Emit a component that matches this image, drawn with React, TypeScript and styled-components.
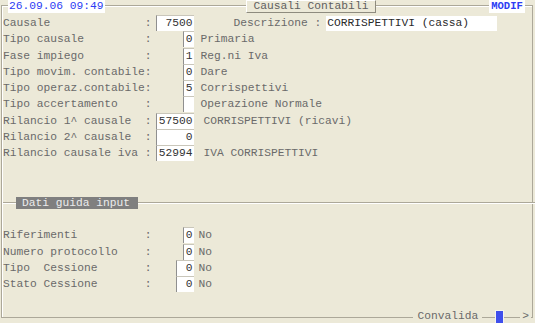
import styled, { createGlobalStyle } from 'styled-components'

const GlobalStyle = createGlobalStyle`
  html, body {
    margin: 0;
    padding: 0;
    background: #ece9d8;
  }
`

// Whole terminal-like window
const Screen = styled.div`
  width: 535px;
  height: 323px;
  box-sizing: border-box;
  padding: 5px 2px 5px 1px;
  background: #ece9d8;
  font-family: "Liberation Mono", "Courier New", monospace;
  font-size: 11.25px;
  color: #6a6a6a;
  overflow: hidden;
`

// Etched group frame
const Frame = styled.div`
  height: 100%;
  box-sizing: border-box;
  border: 1px solid #aca899;
  box-shadow: inset 1px 1px 0 #ffffff;
  padding-left: 1px;
  display: flex;
  flex-direction: column;
`

// Header strip sitting on the top edge of the frame
const Header = styled.div`
  display: flex;
  align-items: flex-start;
  height: 13px;
  margin-top: -6px;
`

const DateBox = styled.div`
  margin-left: 5px;
  width: 97px;
  height: 13px;
  line-height: 13px;
  padding-left: 1px;
  box-sizing: border-box;
  background: #ffffff;
  color: #2c3cf4;
`

const Title = styled.div`
  margin-left: 141px;
  width: 130px;
  height: 13px;
  box-sizing: border-box;
  line-height: 11px;
  text-align: center;
  background: #ece9d8;
  border: 1px solid;
  border-color: #ffffff #8e8b7e #8e8b7e #ffffff;
  color: #606060;
`

const ModeBox = styled.div`
  margin-left: 113px;
  width: 36px;
  height: 13px;
  line-height: 13px;
  text-align: center;
  background: #ffffff;
  color: #2c3cf4;
  font-weight: bold;
  font-size: 10.5px;
`

const Body = styled.div`
  padding-top: 2px;
`

const Row = styled.div`
  display: flex;
  align-items: center;
  height: 16.25px;
`

const Label = styled.span`
  flex: none;
  width: 21ch;
  white-space: pre;
`

const Colon = styled.span`
  flex: none;
  width: 1ch;
`

// Slot where input boxes line up on their right edge
const FieldSlot = styled.div`
  flex: none;
  width: 42px;
  display: flex;
  justify-content: flex-end;
`

const ValueBox = styled.div<{ $chars: number }>`
  width: calc(${(p) => p.$chars}ch + 2px);
  height: 15px;
  line-height: 15px;
  box-sizing: content-box;
  padding-right: 1px;
  background: #ffffff;
  border-left: 1px solid #8f8f8f;
  border-top: 1px solid #c9c6ba;
  color: #333333;
  text-align: right;
  white-space: pre;
`

const Desc = styled.span<{ $gap?: number }>`
  margin-left: ${(p) => p.$gap ?? 7}px;
  white-space: pre;
`

const DescLabel = styled.span`
  margin-left: 40px;
  white-space: pre;
`

const DescBox = styled.div`
  margin-left: 5px;
  width: 171px;
  height: 15px;
  line-height: 15px;
  box-sizing: border-box;
  padding-left: 1px;
  background: #ffffff;
  color: #2a2a2a;
  white-space: pre;
`

// "Dati guida input" separator
const Section = styled.div`
  display: flex;
  align-items: center;
  height: 12px;
  margin-top: 36px;
  margin-right: -3px;
`

const Rule = styled.div<{ $width?: string }>`
  flex: ${(p) => (p.$width ? 'none' : '1')};
  width: ${(p) => p.$width ?? 'auto'};
  height: 0;
  border-top: 1px solid #aca899;
  border-bottom: 1px solid #ffffff;
`

const SectionLabel = styled.div`
  flex: none;
  width: 122px;
  height: 12px;
  line-height: 12px;
  box-sizing: border-box;
  padding-left: 6px;
  background: #7f7f7f;
  color: #ececec;
  white-space: pre;
`

const Lower = styled.div`
  margin-top: 18px;
`

// Bottom strip sitting on the lower edge of the frame
const Footer = styled.div`
  margin-top: auto;
  margin-bottom: -6px;
  height: 13px;
  display: flex;
  justify-content: flex-end;
  align-items: center;
`

const FooterText = styled.span`
  background: #ece9d8;
  padding: 0 4px;
  margin-right: 13px;
  line-height: 13px;
`

const Cursor = styled.div`
  width: 7px;
  height: 12px;
  background: #3f4fec;
  border: 1px solid #f5f4ef;
  margin-right: 16px;
`

const Arrow = styled.span`
  background: #ece9d8;
  padding: 0 2px;
  margin-right: 1px;
  line-height: 13px;
`

type Field = {
  label: string
  value: string
  chars: number
  desc?: string
  gap?: number
}

const topFields: Field[] = [
  { label: 'Tipo causale', value: '0', chars: 1, desc: 'Primaria' },
  { label: 'Fase impiego', value: '1', chars: 1, desc: 'Reg.ni Iva' },
  { label: 'Tipo movim. contabile', value: '0', chars: 1, desc: 'Dare' },
  { label: 'Tipo operaz.contabile', value: '5', chars: 1, desc: 'Corrispettivi' },
  { label: 'Tipo accertamento', value: '', chars: 1, desc: 'Operazione Normale' },
  { label: 'Rilancio 1^ causale', value: '57500', chars: 5, desc: 'CORRISPETTIVI (ricavi)', gap: 10 },
  { label: 'Rilancio 2^ causale', value: '0', chars: 5 },
  { label: 'Rilancio causale iva', value: '52994', chars: 5, desc: 'IVA CORRISPETTIVI', gap: 10 },
]

const lowerFields: Field[] = [
  { label: 'Riferimenti', value: '0', chars: 1, desc: 'No', gap: 5 },
  { label: 'Numero protocollo', value: '0', chars: 1, desc: 'No', gap: 5 },
  { label: 'Tipo  Cessione', value: '0', chars: 2, desc: 'No', gap: 5 },
  { label: 'Stato Cessione', value: '0', chars: 2, desc: 'No', gap: 5 },
]

function FieldRow({ field }: { field: Field }) {
  return (
    <Row>
      <Label>{field.label}</Label>
      <Colon>:</Colon>
      <FieldSlot>
        <ValueBox $chars={field.chars}>{field.value}</ValueBox>
      </FieldSlot>
      {field.desc && <Desc $gap={field.gap}>{field.desc}</Desc>}
    </Row>
  )
}

export default function App() {
  return (
    <>
      <GlobalStyle />
      <Screen>
        <Frame>
          <Header>
            <DateBox>26.09.06 09:49</DateBox>
            <Title>Causali Contabili</Title>
            <ModeBox>MODIF</ModeBox>
          </Header>

          <Body>
            <Row>
              <Label>Causale</Label>
              <Colon>:</Colon>
              <FieldSlot>
                <ValueBox $chars={5}>7500</ValueBox>
              </FieldSlot>
              <DescLabel>Descrizione :</DescLabel>
              <DescBox>CORRISPETTIVI (cassa)</DescBox>
            </Row>
            {topFields.map((f) => (
              <FieldRow key={f.label} field={f} />
            ))}
          </Body>

          <Section>
            <Rule $width="13px" />
            <SectionLabel>Dati guida input</SectionLabel>
            <Rule />
          </Section>

          <Lower>
            {lowerFields.map((f) => (
              <FieldRow key={f.label} field={f} />
            ))}
          </Lower>

          <Footer>
            <FooterText>Convalida</FooterText>
            <Cursor />
            <Arrow>&gt;</Arrow>
          </Footer>
        </Frame>
      </Screen>
    </>
  )
}
